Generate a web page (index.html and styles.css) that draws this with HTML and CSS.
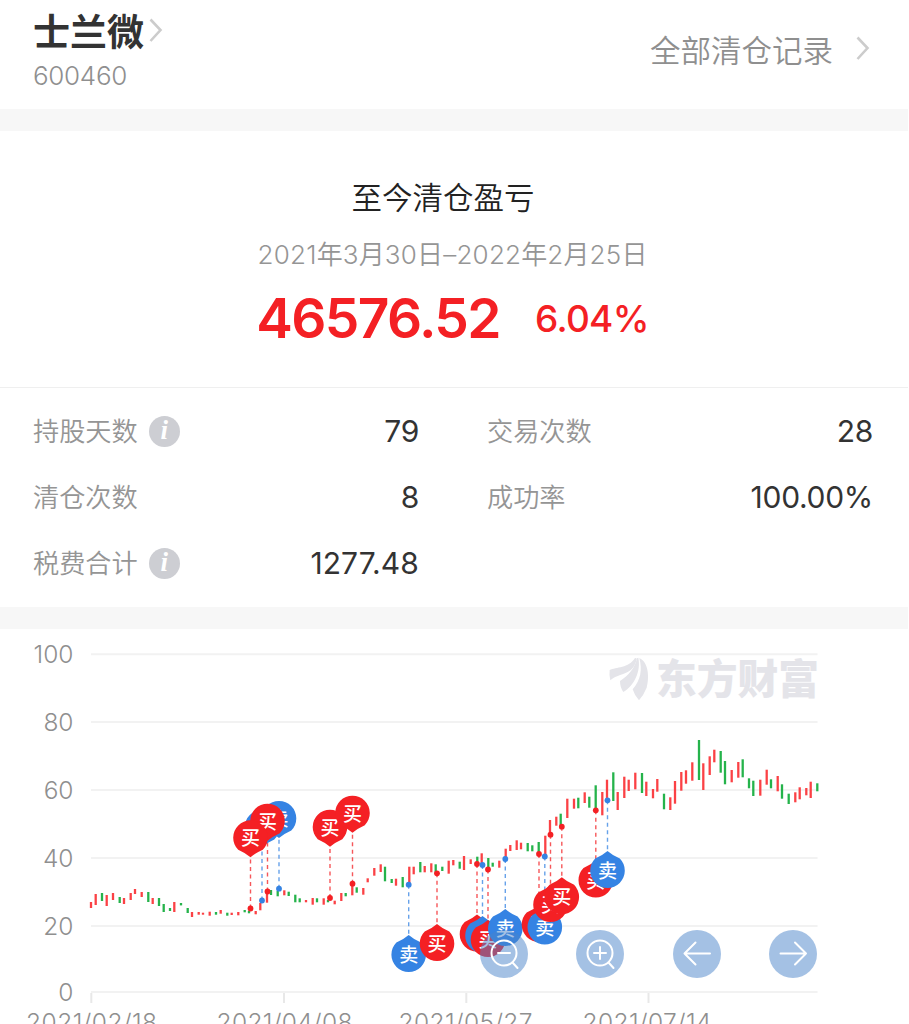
FILE: index.html
```
<!DOCTYPE html>
<html lang="zh-CN">
<head>
    <meta charset="UTF-8">
    <title>士兰微 600460</title>
    <link rel="stylesheet" href="styles.css">
</head>
<body>
<header class="header">
    <div class="stock">
        <h1>士兰微 <svg class="arrow" viewBox="0 0 14 25"><path d="M1.5 1.5 11.5 12 1.5 23"/></svg></h1>
        <p>600460</p>
    </div>
    <a class="all">全部清仓记录 <svg class="arrow" viewBox="0 0 14 25"><path d="M1.5 1.5 11.5 12 1.5 23"/></svg></a>
</header>

<section class="profit">
    <h2>至今清仓盈亏</h2>
    <p class="date"><span>2021</span>年<span>3</span>月<span>30</span>日<span>–2022</span>年<span>2</span>月<span>25</span>日</p>
    <div class="money">
        <strong>46576.52</strong>
        <em>6.04%</em>
    </div>
</section>

<section class="stats">
    <dl><dt><span>持股天数</span> <i>i</i></dt><dd>79</dd></dl>
    <dl><dt><span>交易次数</span></dt><dd>28</dd></dl>
    <dl><dt><span>清仓次数</span></dt><dd>8</dd></dl>
    <dl><dt><span>成功率</span></dt><dd>100.00%</dd></dl>
    <dl><dt><span>税费合计</span> <i>i</i></dt><dd class="fee">1277.48</dd></dl>
</section>

<section class="chart">
    <svg id="chart" viewBox="0 629 908 395">
        <g id="grid"></g>
        <g class="logo">
            <g transform="translate(580 640) scale(.3333)">
                <path d="M89 90C108 81 146 85 165 54Q171 54 170 58C165 79 157 89 143 96C121 106 104 109 91 121Q87 106 89 90Z"/>
                <path d="M171 55C164 86 146 106 120 123Q120 142 130 156C164 136 183 92 175 53Z"/>
                <path d="M178 54C205 66 209 111 200 143Q191 165 177 181Q163 165 158 148C183 119 187 89 178 54Z"/>
            </g>
            <text x="656" y="693.500" textLength="163" lengthAdjust="spacingAndGlyphs">东方财富</text>
        </g>
        <g id="candle"></g>
        <g id="pins"></g>
    </svg>
    <div class="tools">
        <button><svg viewBox="0 0 48 48"><circle cx="24" cy="23" r="12.5"/><path d="M18 23h12M32.5 32.5l5 5.5"/></svg></button>
        <button><svg viewBox="0 0 48 48"><circle cx="24" cy="23" r="12.5"/><path d="M18 23h12M24 17v12M32.5 32.5l5 5.5"/></svg></button>
        <button><svg viewBox="0 0 48 48"><path d="M37 23.5H11.5M22.500 12.500 11.500 23.500 22.500 34.500"/></svg></button>
        <button><svg viewBox="0 0 48 48"><path d="M11.500 23.500H37M26 12.500 37 23.500 26 34.500"/></svg></button>
    </div>
</section>
<script src="chart.js"></script>
</body>
</html>
```
FILE: styles.css
```
* {margin:0; padding:0; box-sizing:border-box;}
body {width:908px; height:1024px; overflow:hidden; background:#fff; color:#333; font-family:Inter, "Noto Sans CJK SC", sans-serif;}
svg {display:block;}
.header {display:flex; justify-content:space-between; height:131px; padding:6px 38px 0 33px; border-bottom:22px solid #f7f7f7;}
.stock h1 {display:flex; gap:5px; font-size:37px; line-height:54px; font-weight:700;}
.stock h1 .arrow {margin-top:12px;}
.stock p {font-size:26px; line-height:32px; font-weight:300; color:#8f8f8f; letter-spacing:-.3px;}
.arrow {width:14px; height:25px; fill:none; stroke:#ccc; stroke-width:2.6;}
.all {display:flex; align-items:center; gap:23px; height:85px; font-size:30.5px; font-weight:350; color:#8f8f8f;}
.profit {height:256px; padding-top:44px; text-align:center;}
.profit h2 {font-size:30.5px; line-height:46px; font-weight:350; margin-right:22px; color:#222;}
.date {margin:14px 3px 0 0; font-size:26px; line-height:40px; font-weight:350; color:#959595; white-space:nowrap;}
.date span {font-weight:300; letter-spacing:.25px;}
.money {display:flex; justify-content:center; align-items:center; gap:35px; height:86px; margin-right:3px; color:#f42024;}
.money strong {font-size:55px; font-weight:600; letter-spacing:-1.6px;}
.money em {font-size:37px; font-style:normal; font-weight:500; letter-spacing:-.7px;}
.stats {display:grid; grid-template-columns:386px 386px; column-gap:68px; grid-auto-rows:66px; height:242px; padding:10px 33px 0; border-top:1px solid #efefef; border-bottom:22px solid #f7f7f7;}
.stats dl {display:flex; justify-content:space-between; align-items:center;}
.stats dt {display:flex; align-items:center; gap:11px; font-size:26.200px; font-weight:350; color:#959595;}
.stats dt span {margin-top:-3px;}
.stats dd {font-size:30px; font-weight:400; letter-spacing:-.3px;}
.stats .fee {letter-spacing:.1px;}
.stats i {width:31px; height:31px; border-radius:50%; background:#cdced3; color:#fff; font:italic bold 27px/29px "Liberation Serif", serif; text-align:center;}
.chart {position:relative; height:395px;}
#chart {width:908px; height:395px;}
#grid path {fill:none; stroke:#f2f2f2; stroke-width:2;}
#grid .tick {stroke:#e8e8e8;}
#grid text {font-size:24.500px; font-weight:300; fill:#8f8f8f;}
.logo {fill:#e4e4e9;}
.logo text {font-family:"Noto Sans CJK SC", sans-serif; font-size:41px; font-weight:900;}
#candle path {fill:none; stroke-width:2.3;}
.up {stroke:#fb4145;}
.down {stroke:#25b34b;}
.buy {fill:#f42024; stroke:#f42024;}
.sell {fill:#3583e3; stroke:#3583e3;}
#pins line {stroke-width:1.4; stroke-dasharray:4 3.5;}
#pins path, #pins circle {stroke:none;}
#pins text {fill:#fff; stroke:none; font-size:19px; font-weight:500; text-anchor:middle; font-family:"Noto Sans CJK SC", sans-serif;}
.tools {position:absolute; left:480px; top:301px; display:flex; gap:48.300px;}
.tools button {width:48px; height:48px; border:0; border-radius:50%; background:rgba(73,131,201,.5);}
.tools svg {fill:none; stroke:#fff; stroke-width:2; stroke-linecap:round; stroke-linejoin:round;}
```
FILE: chart.js
```
// [x, 最高, 最低, 1:涨 0:跌]
var candles = [
    [91,902,908,1],[95.7,894,905,1],[102,893,901,0],[106.7,895,906,1],[113,893,900,1],[119.7,897,903,0],
    [124,898,904,1],[130.7,893,900,1],[135,889,894,1],[141.7,892,897,1],[148.3,892,902,0],[152.7,898,904,1],
    [159,898,906,0],[163.7,904,912,0],[170,908,911,0],[174.3,902,912,1],[181,903,905.4,0],[187.7,908,913,0],
    [192,912,917,1],[198.7,912,914.7,1],[203,912.7,914.7,1],[209.7,911.7,915.7,1],[216,912,914.7,0],[220.7,910,913.7,1],
    [227.3,912.7,915.7,0],[231.7,912.7,915,1],[238.3,912,915.3,1],[244.7,910,912.3,0],[249,911,913.3,0],[255.7,911,914.3,1],
    [260.3,903,910.3,1],[267,891,902.7,1],[271,890,895,0],[277.7,891,896.3,0],[284.3,890.3,895.3,1],[288.7,891.7,896,0],
    [295.3,894.7,902.3,0],[299.7,898.3,902.3,0],[306,900,902.3,1],[312.7,898,904.7,1],[317,898.3,902.3,0],[323.7,898.3,904.7,1],
    [328,900,902.3,0],[334.7,900.7,904.3,1],[341.3,893,901,1],[345.7,893,896.3,0],[352.3,884,895.3,1],[356.7,887.3,892.7,0],
    [363.3,888,894.7,1],[367.7,878.3,882.3,1],[374.3,868,875.7,1],[380.7,864.3,872,1],[385,866.7,881.3,0],[391.7,879,883,0],
    [396,878.7,885.7,1],[402.7,877,887.3,0],[409.3,866.7,883,1],[413.7,866.7,874.3,1],[420.3,862,872.3,0],[424.7,866,872.3,1],
    [431.3,863.3,872.3,1],[435.7,864.3,872.7,0],[442.3,866.7,871,0],[448.7,860.7,873.7,1],[453.3,860,865.3,1],[459.7,861.7,868.7,0],
    [464,856,870,1],[470.7,859.3,864,1],[477.3,856.7,862.7,0],[481.7,853.3,864,1],[488.3,858,868.3,0],[492.7,862.7,866.7,0],
    [499.3,860.7,867.7,1],[505.7,848.7,857.3,1],[510.3,845,851,1],[516.7,840.3,850,1],[521,842.7,849.3,1],[527.7,843,851.3,0],
    [532.3,845.3,851.3,0],[538.7,842,852.7,0],[545.3,835.7,856,1],[550,820,834,1],[556.3,816.7,825.7,1],[560.7,813.7,826,0],
    [567.3,798.7,818,1],[574,798.7,808.7,1],[578.3,797.7,808.3,0],[584.7,792.3,803,1],[589.3,796.7,807.7,0],[595.7,785.3,809.7,0],
    [602.3,792,815.3,1],[607,779.7,800,1],[613.3,772.3,801,0],[617.7,792,810,1],[624.3,776.7,798,1],[628.7,779.7,791,1],
    [635.3,772.7,789.3,1],[642,773,793,0],[646.3,781.7,796,1],[653,789,798.3,1],[657.3,779,791.7,1],[664,793.7,809.3,0],
    [670.3,797.3,810,1],[675,781,803.7,1],[681.3,772,790.7,1],[686,770.3,783.7,1],[692.3,762.3,780.7,1],[699,740,780,0],
    [703.3,763.3,790,1],[709.7,756.3,775,1],[714.3,749.7,762.3,1],[720.7,751,772.7,0],[725,761,784.3,0],[731.7,770,782.3,1],
    [738.3,762,777.7,1],[742.7,759.3,777.3,0],[749,778.3,788.3,0],[753.3,780.7,796,0],[760.3,779.7,795.7,1],[766.7,769.7,784.7,1],
    [771,779.3,788.3,0],[777.7,776,791.3,1],[782,784.3,798.7,0],[788.7,793.7,804,0],[795.3,792.3,802.3,1],[799.7,787.3,799.3,1],
    [806.3,788,795.3,1],[810.7,781.7,798,1],[817.3,783.3,791.3,0]
];

// [x, 价格点 y, 气泡尖 y, 类型]
var pins = [
    [279,888.7,838,"sell"],[262,900.5,847,"sell"],[267.5,891.5,840.7,"buy"],[250.5,908.5,857.3,"buy"],
    [330,898,846.7,"buy"],[352.5,883.7,832.7,"buy"],
    [408.7,884.7,935,"sell"],[437,873.3,924,"buy"],
    [477,864,914.5,"buy"],[482.5,865,916,"sell"],[488,869.5,920,"buy"],[505.3,859,909,"sell"],
    [539,854,905,"buy"],[544.8,856.5,907.5,"sell"],[550.5,834.7,885,"buy"],[561.8,826.7,877.3,"buy"],
    [595.8,810.3,860.5,"buy"],[607.5,800.3,851,"sell"]
];

var html = "";
[654.2,722,790,858,926,992].forEach(function(y, i){
    html += '<path d="M91 ' + y + 'H817.500"/>';
    html += '<text x="73.500" y="' + (y + 9) + '" text-anchor="end">' + (100 - i * 20) + '</text>';
});
[[91.3,26,"2021/02/18",131],[284,216.5,"2021/04/08",136],[466.3,398.5,"2021/05/27",134],[648.5,582.5,"2021/07/14",129]].forEach(function(d){
    html += '<path class="tick" d="M' + d[0] + ' 993v10"/>';
    html += '<text x="' + d[1] + '" y="1031" textLength="' + d[3] + '">' + d[2] + '</text>';
});
document.querySelector("#grid").innerHTML = html;

html = "";
candles.forEach(function(c){
    html += '<path class="' + (c[3] ? "up" : "down") + '" d="M' + c[0] + ' ' + c[1] + 'V' + c[2] + '"/>';
});
document.querySelector("#candle").innerHTML = html;

// 虚线先画, 气泡后画
html = "";
pins.forEach(function(p){
    html += '<g class="' + p[3] + '"><line x1="' + p[0] + '" y1="' + p[1] + '" x2="' + p[0] + '" y2="' + p[2] + '" opacity=".75"/>';
    html += '<circle cx="' + p[0] + '" cy="' + p[1] + '" r="2.900"/></g>';
});
pins.forEach(function(p){
    var s = p[2] < p[1] ? -1 : 1;
    html += '<g class="' + p[3] + '" transform="translate(' + p[0] + ' ' + p[2] + ')">';
    html += '<path transform="scale(1 ' + s + ')" d="M0 0Q4.500 4 12.300 7.500A17.300 17.300 0 1 1 -12.300 7.500Q-4.500 4 0 0Z"/>';
    html += '<text y="' + (s < 0 ? -12 : 27) + '">' + (p[3] == "buy" ? "买" : "卖") + '</text></g>';
});
document.querySelector("#pins").innerHTML = html;
```
